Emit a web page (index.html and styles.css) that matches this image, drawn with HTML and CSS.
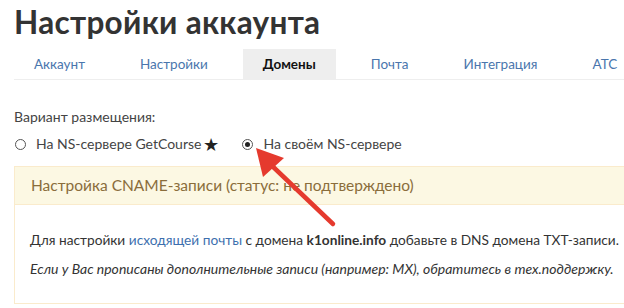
FILE: index.html
```html
<!DOCTYPE html>
<html lang="ru">
<head>
<meta charset="utf-8">
<link rel="stylesheet" href="styles.css">
</head>
<body>
<div class="page">
  <h1 class="title">Настройки аккаунта</h1>
  <ul class="tabs">
    <li class="tab"><a>Аккаунт</a></li>
    <li class="tab"><a>Настройки</a></li>
    <li class="tab active"><a>Домены</a></li>
    <li class="tab"><a>Почта</a></li>
    <li class="tab"><a>Интеграция</a></li>
    <li class="tab"><a>АТС</a></li>
  </ul>
  <div class="placement">
    <div class="label">Вариант размещения:</div>
    <div class="radios">
      <label class="radio"><span class="circle"></span>На NS-сервере GetCourse <span class="star">★</span></label>
      <label class="radio"><span class="circle checked"></span>На своём NS-сервере</label>
    </div>
  </div>
  <div class="panel">
    <div class="panel-head">Настройка CNAME-записи (статус: не подтверждено)</div>
    <div class="panel-body">
      <p class="line">Для настройки <a class="link">исходящей почты</a> с домена <b>k1online.info</b> добавьте в DNS домена TXT-записи.</p>
      <p class="line italic">Если у Вас прописаны дополнительные записи (например: MX), обратитесь в тех.поддержку.</p>
    </div>
  </div>
</div>
<svg class="arrow" width="624" height="308" viewBox="0 0 624 308">
  <line x1="333" y1="224" x2="268" y2="162" stroke="#e53a2e" stroke-width="4.5" stroke-linecap="round"/>
  <polygon points="256,148 284,158 263,177" fill="#e53a2e"/>
</svg>
</body>
</html>
```

FILE: styles.css
```css
html, body {
  margin: 0;
  padding: 0;
  background: #fff;
  overflow: hidden;
}
body {
  width: 624px;
  height: 308px;
  position: relative;
  font-family: Lato, "Open Sans", sans-serif;
  color: #333;
}
.page {
  padding-left: 14px;
}
.title {
  margin: 0;
  padding-top: 2px;
  font-size: 31.5px;
  font-weight: 700;
  line-height: 40px;
  color: #333;
  letter-spacing: 0.3px;
}
.tabs {
  list-style: none;
  margin: 7px 0 0 0;
  padding: 0;
  display: flex;
  gap: 15px;
  border-bottom: 1px solid #eee;
  white-space: nowrap;
}
.tab {
  padding: 0 20px;
  height: 30px;
  line-height: 30px;
  font-size: 13.5px;
  color: #4a76ad;
}
.tab.active {
  background: #eee;
  color: #111;
  font-weight: 700;
}
.placement {
  padding-top: 27px;
  font-size: 14px;
  color: #444;
}
.label {
  line-height: 20px;
}
.radios {
  display: flex;
  gap: 22px;
  margin-top: 7px;
  line-height: 20px;
}
.radio {
  display: flex;
  align-items: center;
  white-space: nowrap;
}
.circle {
  width: 9px;
  height: 9px;
  border: 1px solid #555;
  border-radius: 50%;
  margin-right: 10px;
  margin-left: 1px;
  position: relative;
}
.circle.checked::after {
  content: "";
  position: absolute;
  left: 2px;
  top: 2px;
  width: 5px;
  height: 5px;
  border-radius: 50%;
  background: #222;
}
.star {
  margin-left: 2px;
  color: #222;
  font-size: 18px;
  line-height: 20px;
}
.panel {
  margin-top: 12px;
  border: 1px solid #faebcc;
  border-right: none;
  font-size: 14px;
}
.panel-head {
  background: #fcf8e3;
  color: #8a6d3b;
  border-bottom: 1px solid #faebcc;
  height: 37px;
  line-height: 37px;
  padding-left: 16px;
  font-size: 15.5px;
  white-space: nowrap;
}
.panel-body {
  padding: 26px 0 16px 15px;
  height: 56px;
}
.line {
  margin: 0 0 12px 0;
  line-height: 17px;
  white-space: nowrap;
  color: #333;
  font-size: 13.7px;
}
.link {
  color: #3d6fae;
}
.italic {
  font-style: italic;
  font-size: 14px;
}
.arrow {
  position: absolute;
  left: 0;
  top: 0;
  pointer-events: none;
}
```
